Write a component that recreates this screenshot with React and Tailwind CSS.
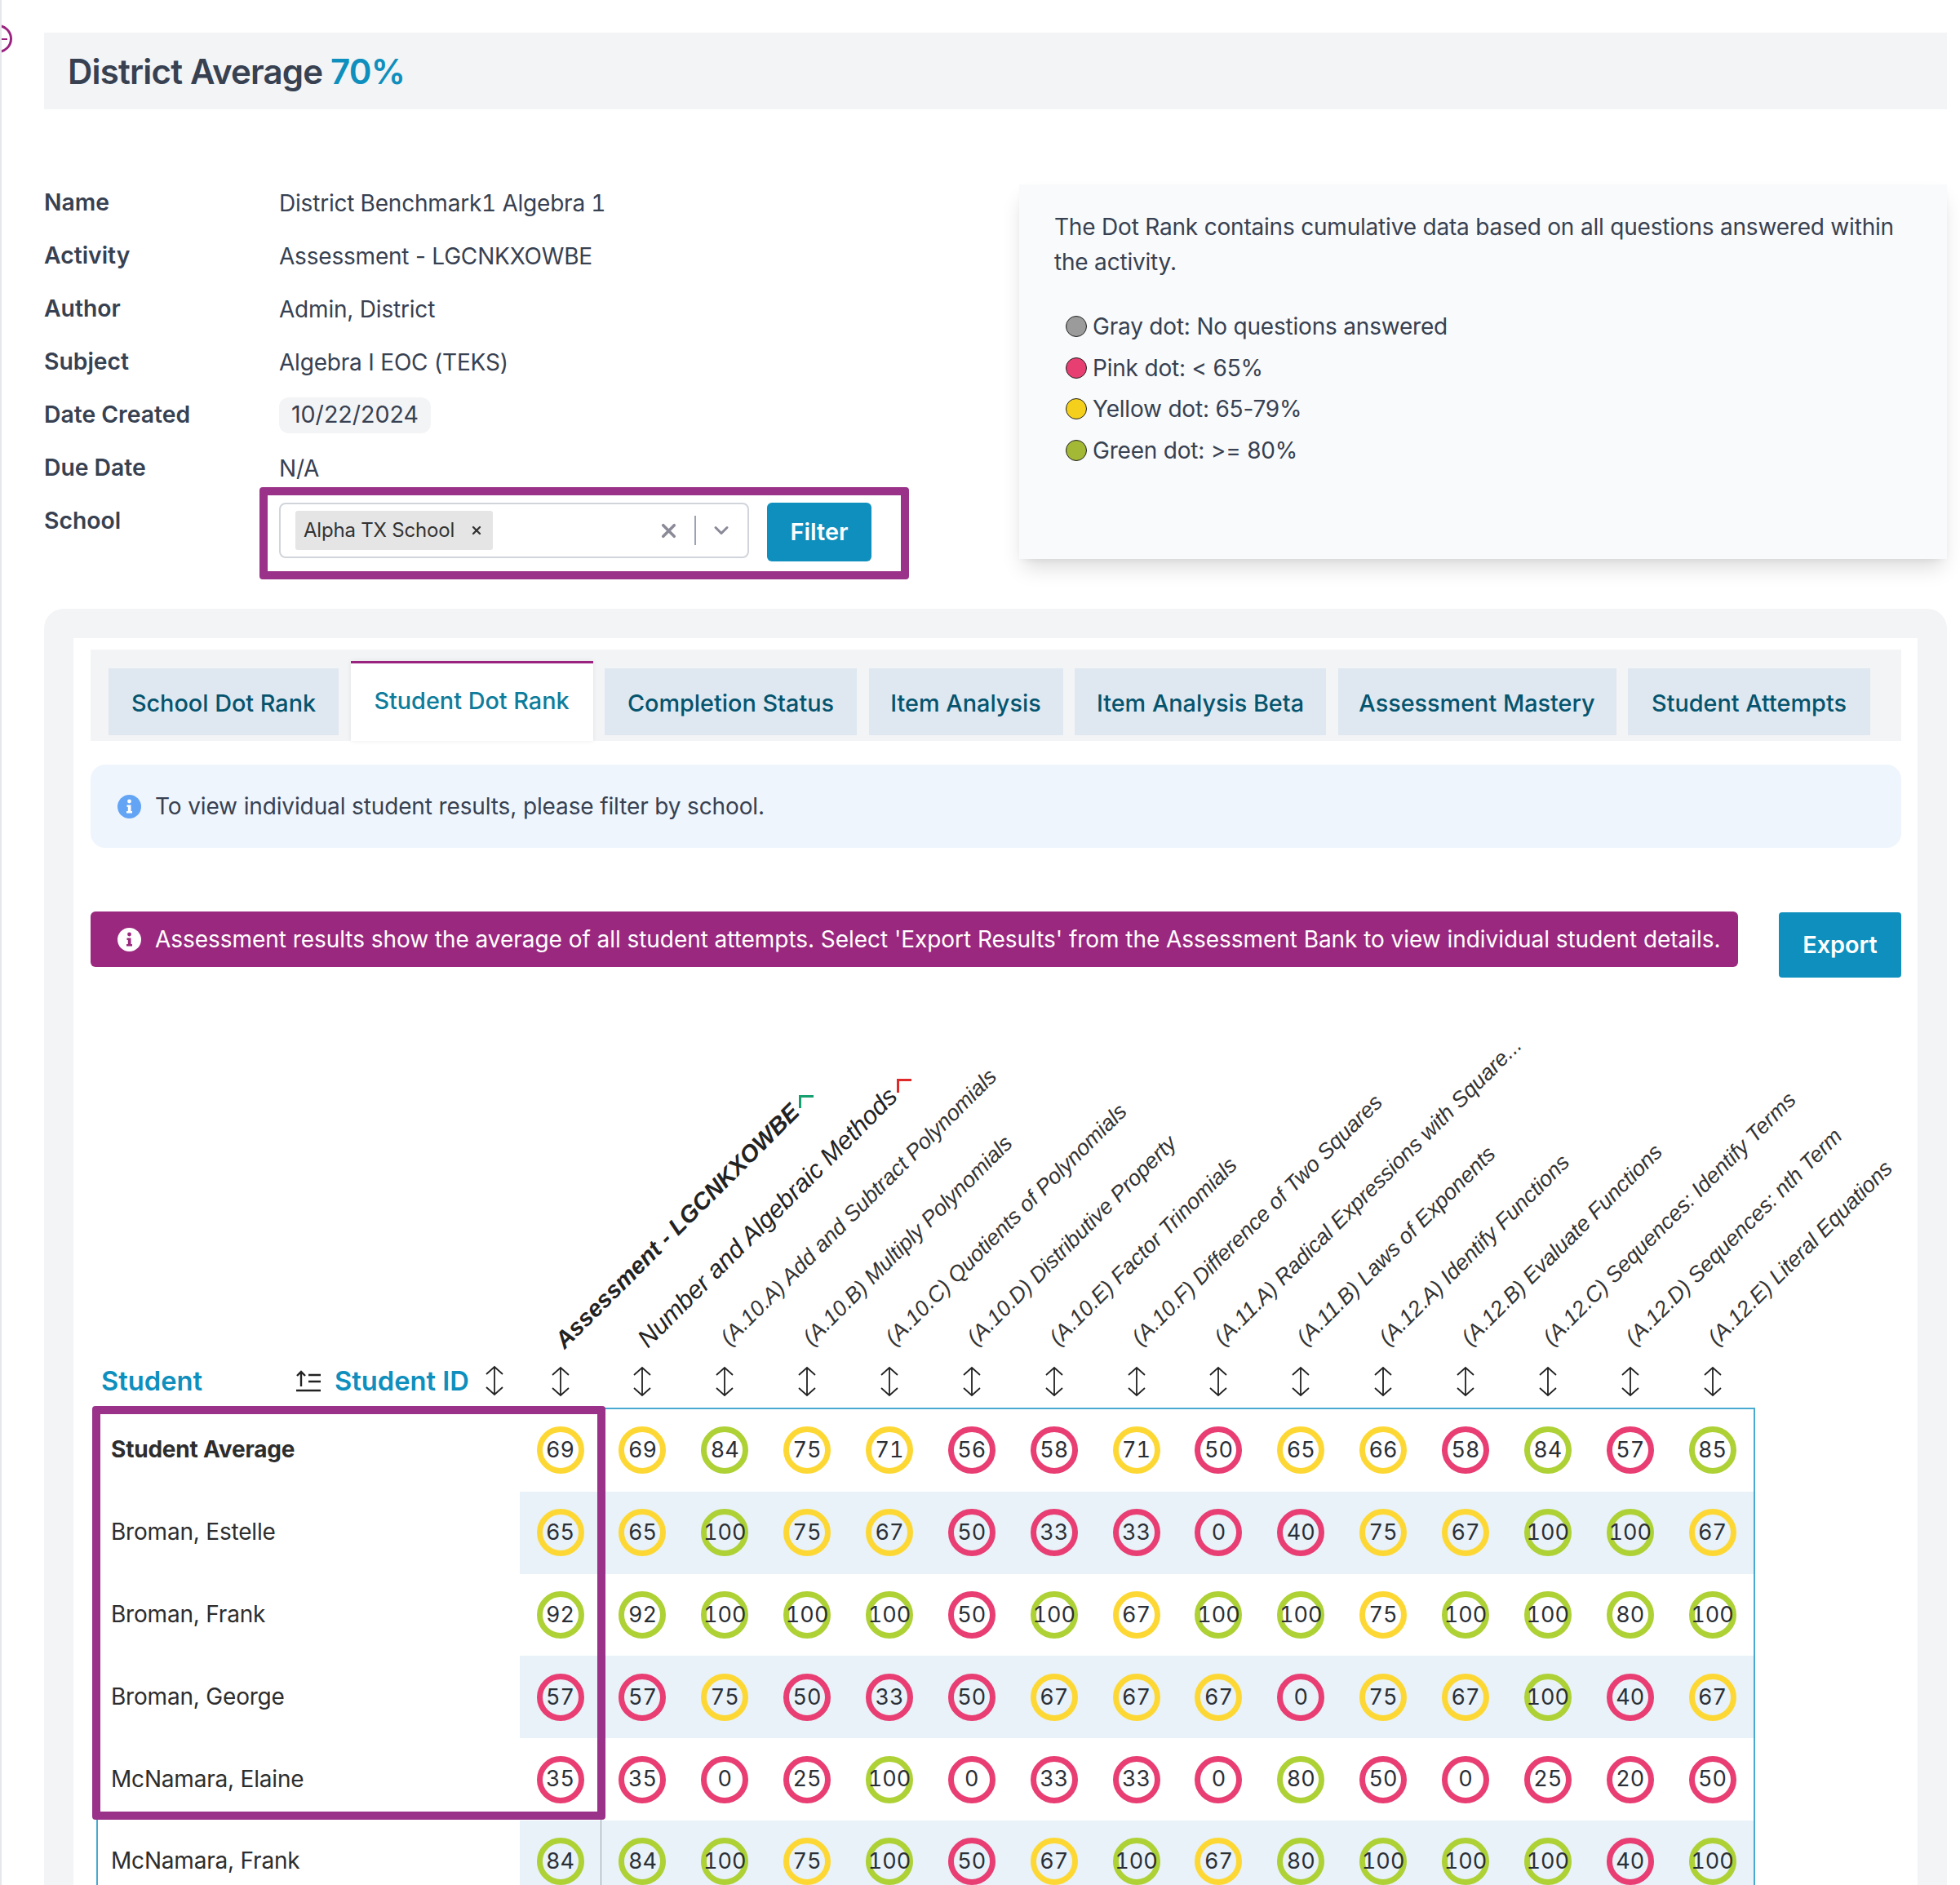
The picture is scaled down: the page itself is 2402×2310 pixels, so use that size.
import React from "react";
import { X, ChevronDown } from "lucide-react";

const meta = [
  ["Name", "District Benchmark1 Algebra 1", "tabular-nums"],
  ["Activity", "Assessment - LGCNKXOWBE", ""],
  ["Author", "Admin, District", ""],
  ["Subject", "Algebra I EOC (TEKS)", ""],
];
const legend = [
  ["Gray dot: No questions answered", "bg-[#9b9b9b]"],
  ["Pink dot: < 65%", "bg-[#e73f72]"],
  ["Yellow dot: 65-79%", "bg-[#f4d01c]"],
  ["Green dot: >= 80%", "bg-[#a3b834]"],
];
const tabs = [
  ["School Dot Rank", "w-[282px]"],
  ["Student Dot Rank", "w-[297px]"],
  ["Completion Status", "w-[309px]"],
  ["Item Analysis", "w-[238px]"],
  ["Item Analysis Beta", "w-[308px]"],
  ["Assessment Mastery", "w-[341px]"],
  ["Student Attempts", "w-[297px]"],
];
const labels = [
  "Assessment - LGCNKXOWBE",
  "Number and Algebraic Methods",
  "(A.10.A) Add and Subtract Polynomials",
  "(A.10.B) Multiply Polynomials",
  "(A.10.C) Quotients of Polynomials",
  "(A.10.D) Distributive Property",
  "(A.10.E) Factor Trinomials",
  "(A.10.F) Difference of Two Squares",
  "(A.11.A) Radical Expressions with Square...",
  "(A.11.B) Laws of Exponents",
  "(A.12.A) Identify Functions",
  "(A.12.B) Evaluate Functions",
  "(A.12.C) Sequences: Identify Terms",
  "(A.12.D) Sequences: nth Term",
  "(A.12.E) Literal Equations",
];
const rows = [
  ["Student Average", 69, 69, 84, 75, 71, 56, 58, 71, 50, 65, 66, 58, 84, 57, 85],
  ["Broman, Estelle", 65, 65, 100, 75, 67, 50, 33, 33, 0, 40, 75, 67, 100, 100, 67],
  ["Broman, Frank", 92, 92, 100, 100, 100, 50, 100, 67, 100, 100, 75, 100, 100, 80, 100],
  ["Broman, George", 57, 57, 75, 50, 33, 50, 67, 67, 67, 0, 75, 67, 100, 40, 67],
  ["McNamara, Elaine", 35, 35, 0, 25, 100, 0, 33, 33, 0, 80, 50, 0, 25, 20, 50],
  ["McNamara, Frank", 84, 84, 100, 75, 100, 50, 67, 100, 67, 80, 100, 100, 100, 40, 100],
];
const gridCols = "grid grid-cols-[519px_100px_repeat(14,100.86px)]";

function SortArrows() {
  return (
    <svg width="24" height="38" viewBox="0 0 24 38" fill="none" stroke="#222" strokeWidth="1.8" className="shrink-0">
      <path d="M12 2V36M2 11L12 2L22 11M2 27L12 36L22 27" />
    </svg>
  );
}

function InfoIcon({ bg, fg }) {
  return (
    <svg width="29" height="29" viewBox="0 0 29 29" className="shrink-0">
      <circle cx="14.5" cy="14.5" r="14.5" fill={bg} />
      <circle cx="14.5" cy="8" r="2.4" fill={fg} />
      <path d="M11.5 12.5H16.5V20H18V22.5H11V20H12.8V15H11.5Z" fill={fg} />
    </svg>
  );
}

function Dot({ v }) {
  const tone = v >= 80 ? "border-[#aed136]" : v >= 65 ? "border-[#fdd835]" : "border-[#e83e73]";
  return (
    <div className={`w-[58px] h-[58px] rounded-full border-[7px] flex items-center justify-center text-[27px] tabular-nums text-[#2b2f36] ${tone}`}>
      {v}
    </div>
  );
}

export default function App() {
  return (
    <div className="relative h-[2310px] overflow-hidden bg-white font-['Inter',sans-serif] text-[#374151] text-[28px] tracking-[-0.2px] border-l-2 border-[#e5e7eb]">
      <div className="absolute -left-[22px] top-[30px] w-[35px] h-[35px] rounded-full border-[3px] border-[#9b2380] bg-white flex items-center justify-end pr-[3px]">
        <div className="w-[9px] h-[2px] bg-[#9b2380]" />
      </div>

      <div className="ml-[52px] mr-[16px] pt-[40px]">
        <div className="h-[94px] bg-[#f3f4f6] pl-[29px] flex items-center text-[42px] font-semibold tracking-[-0.8px]">
          <span>District Average&nbsp;</span>
          <span className="text-[#0e8fbd]">70%</span>
        </div>

        <div className="mt-[82px] h-[530px] flex justify-between items-start">
          <div>
            {meta.map(([k, v, extra]) => (
              <div key={k} className="h-[65px] flex items-center">
                <div className="w-[288px] font-semibold text-[28.3px] tracking-normal">{k}</div>
                <div className={extra}>{v}</div>
              </div>
            ))}
            <div className="h-[65px] flex items-center">
              <div className="w-[288px] font-semibold text-[28.3px] tracking-normal">Date Created</div>
              <div className="h-[44px] w-[186px] rounded-[12px] bg-[#f3f4f6] flex items-center justify-center text-[28.6px] tracking-normal">10/22/2024</div>
            </div>
            <div className="h-[65px] flex items-center">
              <div className="w-[288px] font-semibold text-[28.3px] tracking-normal">Due Date</div>
              <div>N/A</div>
            </div>
            <div className="flex">
              <div className="w-[288px] h-[65px] flex items-center font-semibold text-[28.3px] tracking-normal">School</div>
              <div className="-ml-[24px] -mt-[9px] w-[796px] h-[113px] border-[10px] border-[#9a3289] rounded-[4px] pl-[14px] pt-[9px] flex items-start gap-[22px]">
                <div className="w-[576px] h-[68px] rounded-[8px] border-2 border-[#d1d5db] pl-[18px] pr-[18px] flex items-center">
                  <div className="h-[48px] w-[242px] bg-[#e5e5e5] rounded-[3px] pl-[10px] pr-[12px] flex items-center justify-between text-[24px] text-[#333]">
                    <span>Alpha TX School</span>
                    <X size={16} strokeWidth={3.5} />
                  </div>
                  <X size={27} strokeWidth={3.2} className="ml-auto text-[#8a8a98]" />
                  <div className="w-[2px] h-[36px] bg-[#9ca3af] ml-[18px] mr-[17px]" />
                  <ChevronDown size={28} strokeWidth={2.6} className="text-[#8a8a98]" />
                </div>
                <div className="w-[128px] h-[72px] rounded-[6px] bg-[#0e8fbd] text-white text-[28.8px] tracking-normal font-semibold flex items-center justify-center">Filter</div>
              </div>
            </div>
          </div>

          <div className="w-[1137px] h-[459px] mt-[10px] bg-[#f9fafb] shadow-[0_15px_25px_-5px_rgba(0,0,0,0.14),0_5px_10px_-5px_rgba(0,0,0,0.08)] pl-[43px] pr-[40px] pt-[31px]">
            <p className="leading-[43px]">The Dot Rank contains cumulative data based on all questions answered within the activity.</p>
            <div className="mt-[32px] pl-[14px]">
              {legend.map(([t, c]) => (
                <div key={t} className="h-[50.5px] flex items-center gap-[7px]">
                  <span className={`w-[26px] h-[26px] rounded-full border border-[#222] ${c}`} />
                  <span>{t}</span>
                </div>
              ))}
            </div>
          </div>
        </div>

        <div className="h-[1600px] bg-[#f3f4f6] rounded-[24px] px-[36px] pt-[36px]">
          <div className="h-full bg-white pl-[21px] pr-[20px] pt-[14px]">
            <div className="h-[112px] bg-[#f3f4f6] pl-[22px] flex gap-[14.5px] text-[28.8px] tracking-normal">
              {tabs.map(([t, w], i) =>
                i === 1 ? (
                  <div key={t} className={`${w} mt-[14px] h-[98px] bg-white border-t-[3px] border-[#9b2380] shadow-[0_0_6px_rgba(0,0,0,0.08)] text-[#0e7c9b] font-medium flex justify-center pt-[24px]`}>
                    {t}
                  </div>
                ) : (
                  <div key={t} className={`${w} mt-[23px] h-[82px] bg-[#dfe8f0] text-[#05546e] font-medium flex items-center justify-center pt-[3px]`}>
                    {t}
                  </div>
                )
              )}
            </div>

            <div className="mt-[29px] h-[102px] rounded-[18px] bg-[#eef5fd] pl-[33px] flex items-center gap-[17px]">
              <InfoIcon bg="#63a4f5" fg="#ffffff" />
              <span className="tracking-[-0.13px]">To view individual student results, please filter by school.</span>
            </div>

            <div className="mt-[78px] flex justify-between items-start">
              <div className="w-[2019px] h-[68px] rounded-[6px] bg-[#9b287f] text-white pl-[33px] flex items-center gap-[17px]">
                <InfoIcon bg="#ffffff" fg="#9b287f" />
                <span className="whitespace-nowrap tracking-[-0.05px]">Assessment results show the average of all student attempts. Select 'Export Results' from the Assessment Bank to view individual student details.</span>
              </div>
              <div className="w-[150px] h-[80px] mt-[1px] rounded-[4px] bg-[#0e8fbd] text-white text-[28.8px] tracking-normal font-semibold flex items-center justify-center">Export</div>
            </div>

            <div className="ml-[7px] w-[2033px]">
              <div className={`${gridCols} h-[462px] tracking-normal`}>
                <div />
                {labels.map((t, i) => (
                  <div key={t} className="relative">
                    <span
                      className={
                        i === 0
                          ? "absolute left-[60px] bottom-[1px] origin-bottom-left -rotate-45 whitespace-nowrap italic font-bold text-[29px] leading-[34px] text-[#222] font-['Liberation_Sans',sans-serif]"
                          : i === 1
                          ? "absolute left-[62px] bottom-[2px] origin-bottom-left -rotate-45 whitespace-nowrap italic text-[31px] leading-[34px] text-[#222] font-['Liberation_Sans',sans-serif]"
                          : "absolute left-[61px] bottom-[5px] origin-bottom-left -rotate-45 whitespace-nowrap italic text-[26.9px] leading-[32px] text-[#333] font-['Liberation_Sans',sans-serif]"
                      }
                    >
                      {t}
                    </span>
                    {i === 0 && <span className="absolute left-[342px] bottom-[302px] w-[18px] h-[16px] border-t-[3px] border-l-[3px] border-[#16a070]" />}
                    {i === 1 && <span className="absolute left-[362px] bottom-[321px] w-[18px] h-[17px] border-t-[3px] border-l-[3px] border-[#e02a2a]" />}
                  </div>
                ))}
              </div>

              <div className={`${gridCols} h-[65px] items-center tracking-normal`}>
                <div className="flex items-center pl-[6px] font-semibold text-[32.7px] text-[#0e8fbd]">
                  <span className="w-[238px]">Student</span>
                  <svg width="32" height="28" viewBox="0 0 32 28" fill="none" stroke="#222" strokeWidth="2.4" className="shrink-0">
                    <path d="M1 26H31M7 21V3M2 8L7 3L12 8M16 7H31M16 15H31" />
                  </svg>
                  <span className="ml-[16px] whitespace-nowrap">Student ID</span>
                  <span className="ml-[19px] flex"><SortArrows /></span>
                </div>
                {labels.map((t) => (
                  <div key={t} className="flex justify-center"><SortArrows /></div>
                ))}
              </div>

              <div className="relative border-x-2 border-t-2 border-[#4aa9d0]">
                {rows.map((r, ri) => (
                  <div key={r[0]} className={`grid grid-cols-[517px_100px_repeat(14,minmax(0,1fr))] h-[100.8px] items-stretch ${ri % 2 === 1 ? "bg-[#e8f2f8]" : "bg-white"}`}>
                    <div className={`bg-white flex items-center pl-[16px] pb-[2px] text-[#2d2d2d] ${ri === 0 ? "font-bold" : ""}`}>{r[0]}</div>
                    {r.slice(1).map((v, ci) => (
                      <div key={ci} className={`flex items-center justify-center tracking-normal ${ci === 0 ? "border-r border-[#9ca3af]" : ""}`}>
                        <Dot v={v} />
                      </div>
                    ))}
                  </div>
                ))}
                <div className="absolute -left-[7px] -top-[4px] w-[629px] h-[507px] border-[10px] border-[#9a3289] rounded-[4px]" />
              </div>
            </div>
          </div>
        </div>
      </div>
    </div>
  );
}
